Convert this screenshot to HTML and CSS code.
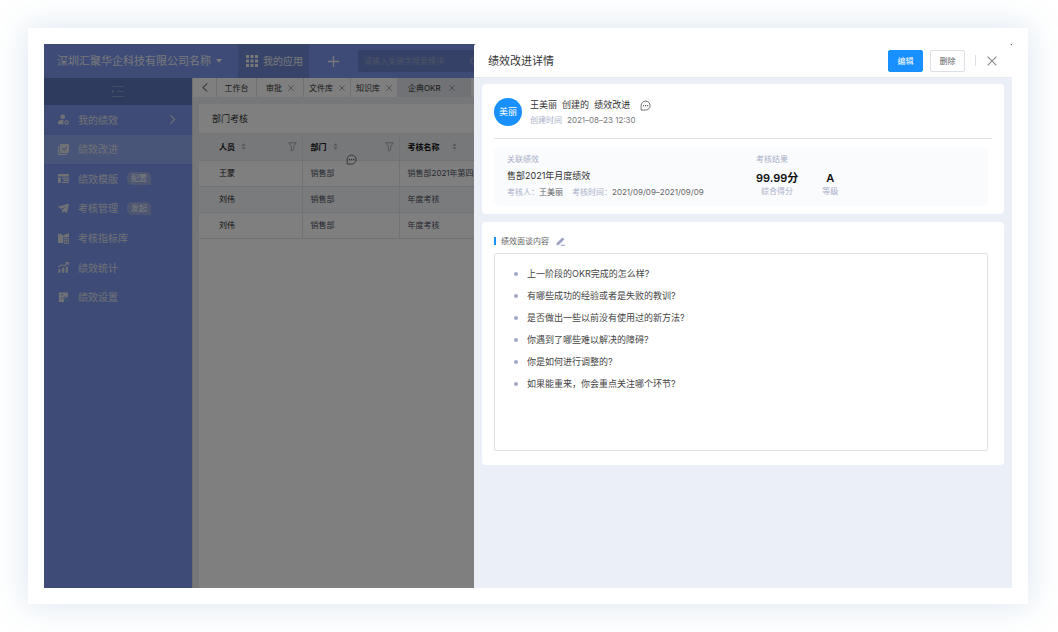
FILE: index.html
```html
<!DOCTYPE html>
<html lang="zh-CN">
<head>
<meta charset="utf-8">
<title>绩效改进详情</title>
<link rel="stylesheet" href="styles.css">
</head>
<body>
<svg class="sprite" aria-hidden="true">
  <symbol id="chat" viewBox="0 0 12 12"><path d="M1.200 11V6A4.900 4.900 0 1 1 6 11Z" fill="none" stroke="currentColor" stroke-width=".9" stroke-linejoin="round"/><path d="M3.200 5.500h1.200v1.200H3.200zM5.500 5.500h1.200v1.200H5.500zM7.800 5.500H9v1.200H7.800z" fill="currentColor"/></symbol>
  <symbol id="sort" viewBox="0 0 6 8"><path d="M3 0l2.400 3.200H.6zM3 8L.6 4.800h4.800z" fill="currentColor"/></symbol>
  <symbol id="filter" viewBox="0 0 9 10"><path d="M.8.8h7.400L5.700 4.600v3.200L3.400 9V4.600z" fill="none" stroke="currentColor" stroke-width=".8" stroke-linejoin="round"/></symbol>
  <symbol id="cross" viewBox="0 0 10 10"><path d="M.6.6l8.800 8.800M9.400.6L.6 9.400" fill="none" stroke="currentColor" stroke-width="1.100"/></symbol>
</svg>
<div class="frame">
  <div class="app">
    <header class="topbar">
      <button class="company">深圳汇聚华企科技有限公司名称 <svg width="6" height="4" viewBox="0 0 6 4"><path d="M0 0h6L3 3.800z" fill="currentColor"/></svg></button>
      <button class="apps"><svg width="12" height="12" viewBox="0 0 12 12" fill="currentColor"><path d="M0 0h3v3H0zM4.500 0h3v3h-3zM9 0h3v3H9zM0 4.500h3v3H0zM4.500 4.500h3v3h-3zM9 4.500h3v3H9zM0 9h3v3H0zM4.500 9h3v3h-3zM9 9h3v3H9z"/></svg>我的应用</button>
      <button class="add" aria-label="新增"><svg width="11" height="11" viewBox="0 0 11 11"><path d="M5.500 0v11M0 5.500h11" stroke="currentColor" stroke-width="1.300"/></svg></button>
      <label class="search"><input type="text" aria-label="搜索" placeholder="请输入关键字搜索模块"><svg width="9" height="9" viewBox="0 0 9 9"><circle cx="4" cy="4" r="3.300" fill="none" stroke="currentColor"/><path d="M6.500 6.500L9 9" stroke="currentColor"/></svg></label>
    </header>
    <div class="main">
      <nav class="sidebar">
        <button class="collapse" aria-label="收起菜单"><svg width="12" height="11" viewBox="0 0 12 11"><path d="M0 .5h12M4.500 5.500H12M0 10.500h12" stroke="currentColor"/><path d="M0 3.500l2.400 2L0 7.500z" fill="currentColor"/></svg></button>
        <ul class="menu">
          <li><a class="item" href="#"><svg viewBox="0 0 10 10"><circle cx="4.300" cy="2.600" r="2.200" fill="currentColor"/><path d="M0 9.300V8c0-1.700 1.300-2.500 3-2.500h2.300C4.500 6.800 4.600 8.300 5.400 9.300z" fill="currentColor"/><circle cx="7.800" cy="7.700" r="1.500" fill="none" stroke="currentColor" stroke-width="1.100"/></svg>我的绩效<svg class="arrow" viewBox="0 0 10 10"><path d="M3 1l4 4-4 4" fill="none" stroke="currentColor"/></svg></a></li>
          <li><a class="item active" href="#"><svg viewBox="0 0 10 10"><path d="M2.800 0h6.200q1 0 1 1v6.200q0 1-1 1H2.800q-1 0-1-1V1q0-1 1-1z" fill="currentColor"/><path d="M.6 2v7.400h7.600" fill="none" stroke="currentColor" stroke-width="1.100"/><path d="M4 4l1.600 1.500L8 2.800" fill="none" stroke="#8b9fe8"/></svg>绩效改进</a></li>
          <li><a class="item" href="#"><svg viewBox="0 0 10 10"><path d="M0 .8h10v2.400H0zM0 4h2.500v5.200H0zM3.500 4H10v1.200H3.500zM5 6h5v1.200H5zM3.500 8H10v1.200H3.500z" fill="currentColor"/></svg>绩效模版<span class="tag">配置</span></a></li>
          <li><a class="item" href="#"><svg viewBox="0 0 10 10"><path d="M0 3.300L10 .5 8.200 9 5.400 7.400 3.600 9.500V6.400L7.500 3 2.800 5.500z" fill="currentColor"/></svg>考核管理<span class="tag">发起</span></a></li>
          <li><a class="item" href="#"><svg viewBox="0 0 10 10"><path d="M0 .4l3.400.8L5 2.400 6.600 1.200 10 .2v3.600H4.600V9.200H0z" fill="currentColor"/><path d="M5.600 4.800H9.600V9.500H5.600zM5.600 7.100H9.600M7.600 4.800v4.700" fill="none" stroke="currentColor" stroke-width=".8"/></svg>考核指标库</a></li>
          <li><a class="item" href="#"><svg viewBox="0 0 10 10"><path d="M.4 6.600h2v3.200h-2zM3.700 5.200h2v4.600h-2zM7 4.400h2v5.400H7z" fill="currentColor"/><path d="M.3 4.600L3.200 2.600l2.400 1L9 .8M6.800.6H9.300V3" fill="none" stroke="currentColor"/></svg>绩效统计</a></li>
          <li><a class="item" href="#"><svg viewBox="0 0 10 10"><path d="M.8.500h8.200v4.500A3 3 0 0 0 5.400 9H.8z" fill="currentColor"/><path d="M2.300 6.800l1.500-1.800 1.500 1L7 3.600M2.300 2.500h2.400" fill="none" stroke="#7c96ee" stroke-width=".7"/><circle cx="8" cy="7.800" r="1.400" fill="none" stroke="#6fb0d8"/></svg>绩效设置</a></li>
        </ul>
      </nav>
      <section class="content">
        <div class="tabs">
          <button class="back" aria-label="返回"><svg width="6" height="9" viewBox="0 0 6 9"><path d="M5.300.5l-4.500 4 4.500 4" fill="none" stroke="currentColor"/></svg></button>
          <button class="tab">工作台</button>
          <button class="tab wide">审批<svg><use href="#cross"/></svg></button>
          <button class="tab wide">文件库<svg><use href="#cross"/></svg></button>
          <button class="tab wide">知识库<svg><use href="#cross"/></svg></button>
          <button class="tab current">企典OKR<svg><use href="#cross"/></svg></button>
          <span class="rest"></span>
        </div>
        <div class="sheet">
          <h2 class="sheet-title">部门考核</h2>
          <table class="grid">
            <thead><tr>
              <th class="c1"><div class="th">人员<svg class="sort"><use href="#sort"/></svg><svg class="filter"><use href="#filter"/></svg></div></th>
              <th class="c2"><div class="th">部门<svg class="sort"><use href="#sort"/></svg><svg class="filter"><use href="#filter"/></svg></div></th>
              <th><div class="th name">考核名称<svg class="sort"><use href="#sort"/></svg></div></th>
            </tr></thead>
            <tbody>
              <tr><td>王蒙</td><td>销售部</td><td>销售部2021年第四季度</td></tr>
              <tr class="alt"><td>刘伟</td><td>销售部</td><td>年度考核</td></tr>
              <tr><td>刘伟</td><td>销售部</td><td>年度考核</td></tr>
            </tbody>
          </table>
          <svg class="note"><use href="#chat"/></svg>
        </div>
      </section>
    </div>
    <div class="mask"></div>
    <aside class="drawer">
      <header class="drawer-head">
        <h1>绩效改进详情</h1>
        <button class="btn primary">编辑</button>
        <button class="btn">删除</button>
        <span class="bar"></span>
        <button class="close" aria-label="关闭"><svg width="10" height="10"><use href="#cross"/></svg></button>
      </header>
      <div class="drawer-body">
        <section class="card">
          <div class="person">
            <span class="avatar">美丽</span>
            <div>
              <div class="who">王美丽&nbsp; 创建的&nbsp; 绩效改进<svg><use href="#chat"/></svg></div>
              <div class="when"><span class="muted">创建时间</span><span>2021–08–23 12:30</span></div>
            </div>
          </div>
          <div class="summary">
            <div class="linked">
              <div class="muted">关联绩效</div>
              <div class="plan">售部2021年月度绩效</div>
              <div class="meta"><span class="muted">考核人：</span><span>王美丽</span><span class="muted second">考核时间：</span><span>2021/09/09–2021/09/09</span></div>
            </div>
            <div class="result">
              <div class="muted">考核结果</div>
              <div class="scores">
                <div><b>99.99分</b><span class="muted">综合得分</span></div>
                <div><b>A</b><span class="muted">等级</span></div>
              </div>
            </div>
          </div>
        </section>
        <section class="card talk">
          <h3>绩效面谈内容<button class="edit" aria-label="编辑内容"><svg width="9" height="9" viewBox="0 0 9 9"><path d="M.4 8.600l.6-2.800L6.500.4l1.900 1.800L3 7.800z" fill="currentColor"/><path d="M4.800 8.300H9" stroke="currentColor"/></svg></button></h3>
          <ul class="questions">
            <li>上一阶段的OKR完成的怎么样?</li>
            <li>有哪些成功的经验或者是失败的教训?</li>
            <li>是否做出一些以前没有使用过的新方法?</li>
            <li>你遇到了哪些难以解决的障碍?</li>
            <li>你是如何进行调整的?</li>
            <li>如果能重来，你会重点关注哪个环节?</li>
          </ul>
        </section>
      </div>
    </aside>
  </div>
</div>
</body>
</html>
```

FILE: styles.css
```css
* { box-sizing: border-box; margin: 0; padding: 0; }
body {
  height: 100vh;
  padding: 28px 30px 28px 28px;
  background: #fff;
  color: #333;
  font: 8px/12px Inter, "Noto Sans CJK SC", sans-serif;
}
button, input { font: inherit; color: inherit; background: none; border: 0; }
ul { list-style: none; }
a { color: inherit; text-decoration: none; }
svg { flex: none; display: block; }
.sprite { position: absolute; width: 0; height: 0; }
.frame { height: 100%; padding: 16px; background: #fff; box-shadow: 0 0 32px rgba(110, 160, 200, .28); }
.app { position: relative; display: flex; flex-direction: column; height: 100%; overflow: hidden; background: #fff; }

.topbar { display: flex; height: 34px; background: #7c96ee; color: #f2f2f4; font-size: 11px; }
.company { display: flex; align-items: center; gap: 5px; width: 194px; padding-left: 13px; white-space: nowrap; }
.apps { display: flex; align-items: center; gap: 5px; width: 71px; padding-left: 8px; background: #6e86d2; font-size: 10px; white-space: nowrap; }
.add { display: grid; place-items: center; width: 49px; }
.search { display: flex; align-items: center; width: 124px; height: 22px; margin-top: 6px; padding: 0 3px 0 6px; background: #6c83ce; border-radius: 2px; font-size: 8px; color: #a2abd0; }
.search input { flex: 1; min-width: 0; }
.search input::placeholder { color: #98a3cc; }

.main { display: flex; flex: 1; min-height: 0; }
.sidebar { flex: none; width: 148px; background: #7c96ee; color: #e0e2ea; font-size: 10px; }
.collapse { display: grid; place-items: center; width: 100%; height: 27px; background: #5e76bc; color: #8d9dcc; }
.menu { display: grid; grid-auto-rows: 1fr; height: 207px; }
.item { display: flex; align-items: center; gap: 9px; height: 100%; padding: 0 14px; }
.item svg { width: 11px; height: 11px; }
.item .arrow { width: 11px; height: 11px; margin-left: auto; }
.item.active { background: #92a8f2; }
.tag { width: 24px; height: 13px; background: #9dadE4; border-radius: 5px 5px 1px 5px; color: #f6f6fa; font-size: 8px; line-height: 13px; text-align: center; }

.content { display: flex; flex-direction: column; flex: 1; background: #eceef2; border-left: 1px solid #dcdce0; }
.tabs { display: flex; height: 19px; background: #fff; font-size: 8px; }
.tabs button, .rest { border-right: 1px solid #e2e2e6; }
.back { display: grid; place-items: center; width: 24px; }
.tab { display: flex; align-items: center; justify-content: center; gap: 6px; width: 40px; white-space: nowrap; }
.tab svg { width: 6px; height: 6px; color: #777; }
.tab.wide { width: 47px; }
.tab.current { justify-content: flex-start; gap: 8px; width: 73px; padding-left: 10px; background: #e2e4ea; }
.rest { flex: 1; }
.sheet { position: relative; flex: 1; margin: 7px 0 0 6px; background: #fff; }
.sheet-title { height: 30px; padding-left: 13px; border-bottom: 1px solid #e4e6ea; font-size: 9px; font-weight: 400; line-height: 30px; }
.grid { width: 100%; border-collapse: collapse; table-layout: fixed; font-size: 8px; text-align: left; white-space: nowrap; }
.grid th { height: 26px; background: #eef0f5; font-weight: 600; color: #111; }
.grid td { height: 26px; color: #4c5264; }
.grid th, .grid td { padding-left: 8px; border-bottom: 1px solid #e2e4e8; border-right: 1px solid #e2e4e8; }
.grid th:first-child, .grid td:first-child { padding-left: 20px; color: #222; }
.grid .c1 { width: 103px; }
.grid .c2 { width: 97px; }
.alt { background: #f5f6f9; }
.th { display: flex; align-items: center; gap: 6px; }
.th.name { gap: 12px; }
.sort { width: 5px; height: 7px; color: #aaa; }
.filter { width: 9px; height: 10px; margin: 0 5px 0 auto; color: #999; }
.note { position: absolute; top: 50px; left: 147px; width: 11px; height: 11px; color: #555; }

.mask { position: absolute; inset: 0; background: rgba(0, 0, 0, .5); }
.drawer { position: absolute; inset: 0 0 0 430px; display: flex; flex-direction: column; overflow: hidden; background: #ebeff7; border-radius: 3px 3px 0 0; }
.drawer-head { display: flex; align-items: center; flex: none; height: 34px; padding: 0 15px 0 14px; background: #fff; border-bottom: 1px solid #e6e9ee; }
.drawer-head h1 { flex: 1; font-size: 11px; font-weight: 400; }
.btn { width: 35px; height: 22px; margin-right: 7px; border: 1px solid #dcdfe6; border-radius: 2px; color: #606266; }
.btn.primary { background: #1890ff; border-color: #1890ff; color: #fff; }
.bar { width: 1px; height: 11px; margin: 0 11px 0 3px; background: #dcdfe6; }
.close { color: #888; }
.drawer-body { display: flex; flex-direction: column; gap: 8px; padding: 6px 8px; }
.card { padding: 13px 12px 8px; background: #fff; border-radius: 4px; }
.person { display: flex; align-items: center; gap: 8px; padding-bottom: 11px; border-bottom: 1px solid #e0e2e5; }
.avatar { width: 28px; height: 28px; border-radius: 50%; background: #1890ff; color: #fff; font-size: 9px; line-height: 28px; text-align: center; }
.who { display: flex; align-items: center; gap: 10px; height: 16px; font-size: 9px; }
.who svg { width: 11px; height: 11px; color: #555; }
.when { display: flex; gap: 5px; height: 14px; line-height: 14px; color: #777; }
.muted { color: #a9afc9; }
.summary { display: flex; margin: 8px 4px 0 0; padding: 6px 13px 8px; background: #fafbfd; border-radius: 5px; }
.linked { width: 249px; }
.plan { font-size: 9px; line-height: 21px; }
.meta { display: flex; color: #666; line-height: 12px; }
.second { margin-left: 9px; }
.scores { display: flex; gap: 24px; padding-top: 6px; }
.scores div { display: flex; flex-direction: column; align-items: center; }
.scores b { font-size: 11px; font-weight: 600; line-height: 14px; color: #111; }
.scores .muted { line-height: 12px; }
.talk { padding: 13px 16px 14px 12px; }
.talk h3 { display: flex; align-items: center; gap: 7px; height: 12px; font-size: 8px; font-weight: 400; color: #666; }
.talk h3::before { content: ""; width: 2px; height: 8px; margin-right: -2px; background: #1890ff; }
.edit { color: #9aa0c4; }
.questions { min-height: 198px; margin-top: 6px; padding: 9px 19px; border: 1px solid #dfe1e4; border-radius: 2px; font-size: 9px; line-height: 22px; }
.questions li { display: flex; align-items: center; gap: 9px; color: #444; }
.questions li::before { content: ""; width: 4px; height: 4px; border-radius: 50%; background: #a3a8c8; }
```
